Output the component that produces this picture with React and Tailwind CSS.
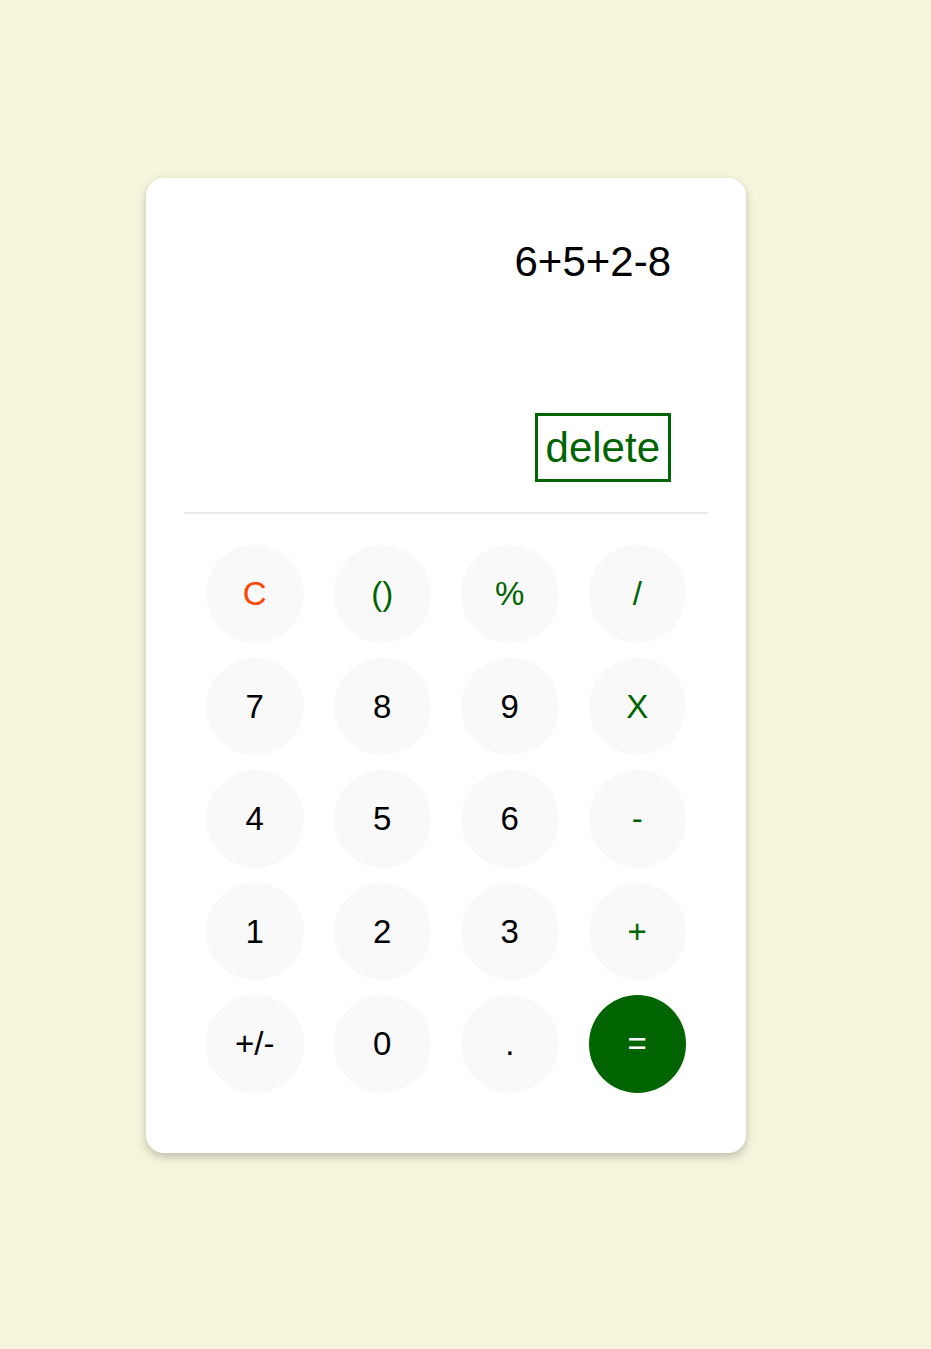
import React from "react";

const keys = [
  { l: "C", c: "text-[#ff4500]" },
  { l: "()", c: "text-[#006400]" },
  { l: "%", c: "text-[#006400]" },
  { l: "/", c: "text-[#006400]" },
  { l: "7", c: "text-black" },
  { l: "8", c: "text-black" },
  { l: "9", c: "text-black" },
  { l: "X", c: "text-[#006400]" },
  { l: "4", c: "text-black" },
  { l: "5", c: "text-black" },
  { l: "6", c: "text-black" },
  { l: "-", c: "text-[#006400]" },
  { l: "1", c: "text-black" },
  { l: "2", c: "text-black" },
  { l: "3", c: "text-black" },
  { l: "+", c: "text-[#006400]" },
  { l: "+/-", c: "text-black" },
  { l: "0", c: "text-black" },
  { l: ".", c: "text-black" },
  { l: "=", c: "text-white", eq: true },
];

export default function App() {
  return (
    <div className="min-h-[1349px] w-full bg-[#f5f5dc] pt-[178px] font-['Liberation_Sans',Arial,sans-serif]">
      <div className="ml-[146px] w-[600px] h-[975px] bg-white rounded-[18px] shadow-[0_4px_10px_rgba(0,0,0,0.22)] px-[38px] pt-[60px]">
        <div className="flex flex-col items-end pr-[37px]">
          <div className="text-[42px] leading-[48px] text-black h-[48px]">6+5+2-8</div>
          <button className="mt-[127px] border-[3px] border-[#006400] text-[#006400] text-[42px] leading-[48px] px-[8px] py-[7.5px] bg-transparent">
            delete
          </button>
        </div>
        <div className="mt-[30px] h-[2px] bg-[#e8e8e8]" />
        <div className="mt-[31px] grid grid-cols-[repeat(4,97.5px)] justify-center gap-x-[30px] gap-y-[15px]">
          {keys.map((k) => (
            <button
              key={k.l}
              className={`w-[97.5px] h-[97.5px] rounded-full flex items-center justify-center text-[33px] ${k.c} ${k.eq ? "bg-[#006400]" : "bg-[#f9f9f9]"}`}
            >
              {k.l}
            </button>
          ))}
        </div>
      </div>
    </div>
  );
}
